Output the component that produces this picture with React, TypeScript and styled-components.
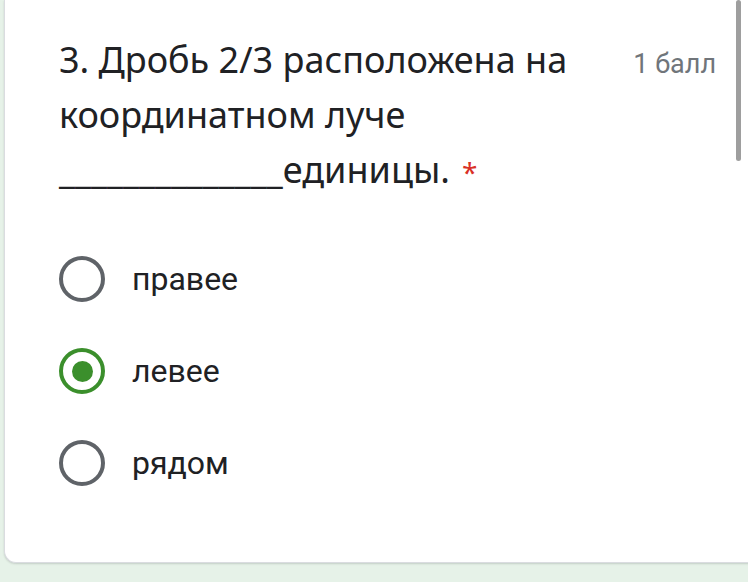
import React from 'react';
import styled, { createGlobalStyle } from 'styled-components';

const GlobalStyle = createGlobalStyle`
  html, body {
    margin: 0;
    padding: 0;
    background: #e6f2e8;
    overflow: hidden;
  }
`;

const Page = styled.div`
  width: 748px;
  height: 582px;
  position: relative;
  overflow: hidden;
`;

const Card = styled.section`
  margin-left: 4px;
  width: 760px;
  height: 563px;
  box-sizing: border-box;
  background: #fff;
  border: 1px solid #dadce0;
  border-top: none;
  border-right: none;
  border-radius: 0 0 0 12px;
  box-shadow: 0 1px 2px rgb(60 64 67 / 20%);
  padding: 32px 0 0 54px;
`;

const Header = styled.div`
  display: flex;
  align-items: baseline;
  gap: 20px;
  width: 657px;
`;

const Title = styled.h2`
  flex: 1;
  margin: 0;
  font-family: 'Noto Sans', 'Open Sans', sans-serif;
  font-weight: 400;
  font-size: 36px;
  line-height: 55px;
  color: #202124;
`;

const Required = styled.span`
  color: #d93025;
  margin-left: 12px;
  font-size: 28px;
`;

const Points = styled.span`
  font-family: Roboto, 'Liberation Sans', sans-serif;
  font-size: 27px;
  color: #70757a;
  white-space: nowrap;
`;

const Options = styled.ul`
  list-style: none;
  margin: 56px 0 0;
  padding: 0;
  display: flex;
  flex-direction: column;
  gap: 46px;
`;

const Option = styled.li`
  display: flex;
  align-items: center;
  gap: 27px;
  height: 46px;
`;

const Radio = styled.span<{ $checked?: boolean }>`
  width: 46px;
  height: 46px;
  box-sizing: border-box;
  border-radius: 50%;
  border: 4px solid ${(p) => (p.$checked ? '#3b8f2c' : '#5f6368')};
  display: flex;
  align-items: center;
  justify-content: center;
  &::after {
    content: '';
    display: ${(p) => (p.$checked ? 'block' : 'none')};
    width: 21px;
    height: 21px;
    border-radius: 50%;
    background: #3b8f2c;
  }
`;

const Label = styled.span`
  font-family: Roboto, 'Liberation Sans', sans-serif;
  font-size: 32px;
  color: #202124;
`;

const Scrollbar = styled.div`
  position: absolute;
  top: 0;
  left: 736px;
  width: 5px;
  height: 161px;
  border-radius: 3px;
  background: #9e9e9e;
`;

const options = [
  { label: 'правее', checked: false },
  { label: 'левее', checked: true },
  { label: 'рядом', checked: false },
];

export default function App() {
  return (
    <Page>
      <GlobalStyle />
      <Card>
        <Header>
          <Title>
            3. Дробь 2/3 расположена на координатном луче ______________единицы.
            <Required>*</Required>
          </Title>
          <Points>1 балл</Points>
        </Header>
        <Options>
          {options.map((o) => (
            <Option key={o.label}>
              <Radio $checked={o.checked} />
              <Label>{o.label}</Label>
            </Option>
          ))}
        </Options>
      </Card>
      <Scrollbar />
    </Page>
  );
}
